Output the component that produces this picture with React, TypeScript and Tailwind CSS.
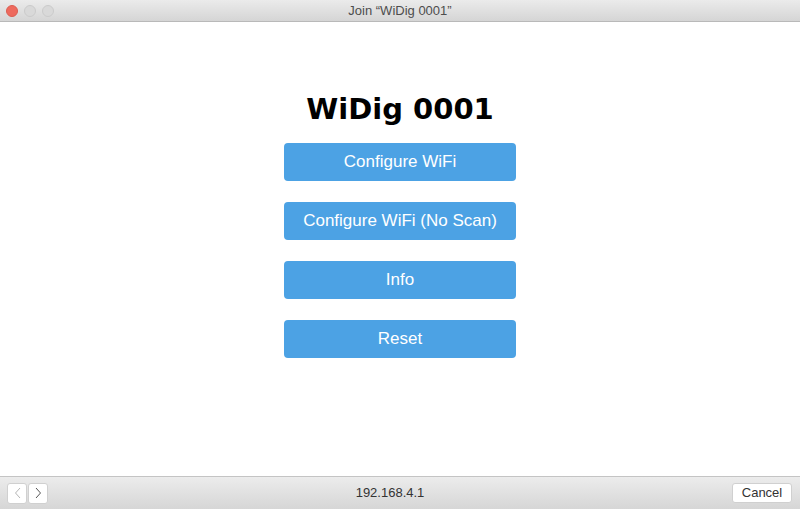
import React from "react";

const btns = ["Configure WiFi", "Configure WiFi (No Scan)", "Info", "Reset"];

export default function App() {
  return (
    <div className="w-[800px] h-[509px] flex flex-col bg-white overflow-hidden" style={{ fontFamily: '"Liberation Sans", Arial, sans-serif' }}>
      <div className="h-[22px] shrink-0 flex items-center relative bg-gradient-to-b from-[#ebebeb] to-[#d5d5d5] border-b border-[#b9b9b9]">
        <div className="absolute left-[6px] top-[5px] flex gap-[6px]">
          <div className="w-[12px] h-[12px] rounded-full bg-[#ee6a5e] border border-[#dc5d51]" />
          <div className="w-[12px] h-[12px] rounded-full bg-[#d9d9d9] border border-[#cbcbcb]" />
          <div className="w-[12px] h-[12px] rounded-full bg-[#d9d9d9] border border-[#cbcbcb]" />
        </div>
        <div className="flex-1 text-center text-[13px] text-[#4d4d4d] leading-none">Join “WiDig 0001”</div>
      </div>
      <div className="flex-1 flex flex-col items-center pt-[69px]">
        <h1 className="text-[29px] leading-[36px] font-bold text-black" style={{ fontFamily: '"DejaVu Sans", Verdana, sans-serif' }}>WiDig 0001</h1>
        <div className="flex flex-col gap-[21px] mt-[16px]">
          {btns.map((b) => (
            <div key={b} className="w-[232px] h-[38px] rounded-[4px] bg-[#4ca2e4] text-white text-[17px] flex items-center justify-center" style={{ fontFamily: '"Liberation Sans", Arial, sans-serif' }}>
              {b}
            </div>
          ))}
        </div>
      </div>
      <div className="h-[33px] shrink-0 flex items-center px-[7px] bg-gradient-to-b from-[#ececec] to-[#d6d6d6] border-t border-[#c4c4c4] relative">
        <div className="flex gap-[1px]">
          <div className="w-[20px] h-[21px] rounded-[3px] bg-white border border-[#d0d0d0] flex items-center justify-center">
            <svg width="7" height="12" viewBox="0 0 7 12"><path d="M6 1L1.5 6 6 11" fill="none" stroke="#b5b5b5" strokeWidth="1" /></svg>
          </div>
          <div className="w-[20px] h-[21px] rounded-[3px] bg-white border border-[#d0d0d0] flex items-center justify-center">
            <svg width="7" height="12" viewBox="0 0 7 12"><path d="M1 1L5.5 6 1 11" fill="none" stroke="#555" strokeWidth="1" /></svg>
          </div>
        </div>
        <div className="flex-1 text-center text-[13px] text-[#333]">192.168.4.1</div>
        <div className="w-[60px] h-[20px] rounded-[3px] bg-white border border-[#d0d0d0] text-[13px] text-[#333] flex items-center justify-center mr-[1px]">Cancel</div>
      </div>
    </div>
  );
}
